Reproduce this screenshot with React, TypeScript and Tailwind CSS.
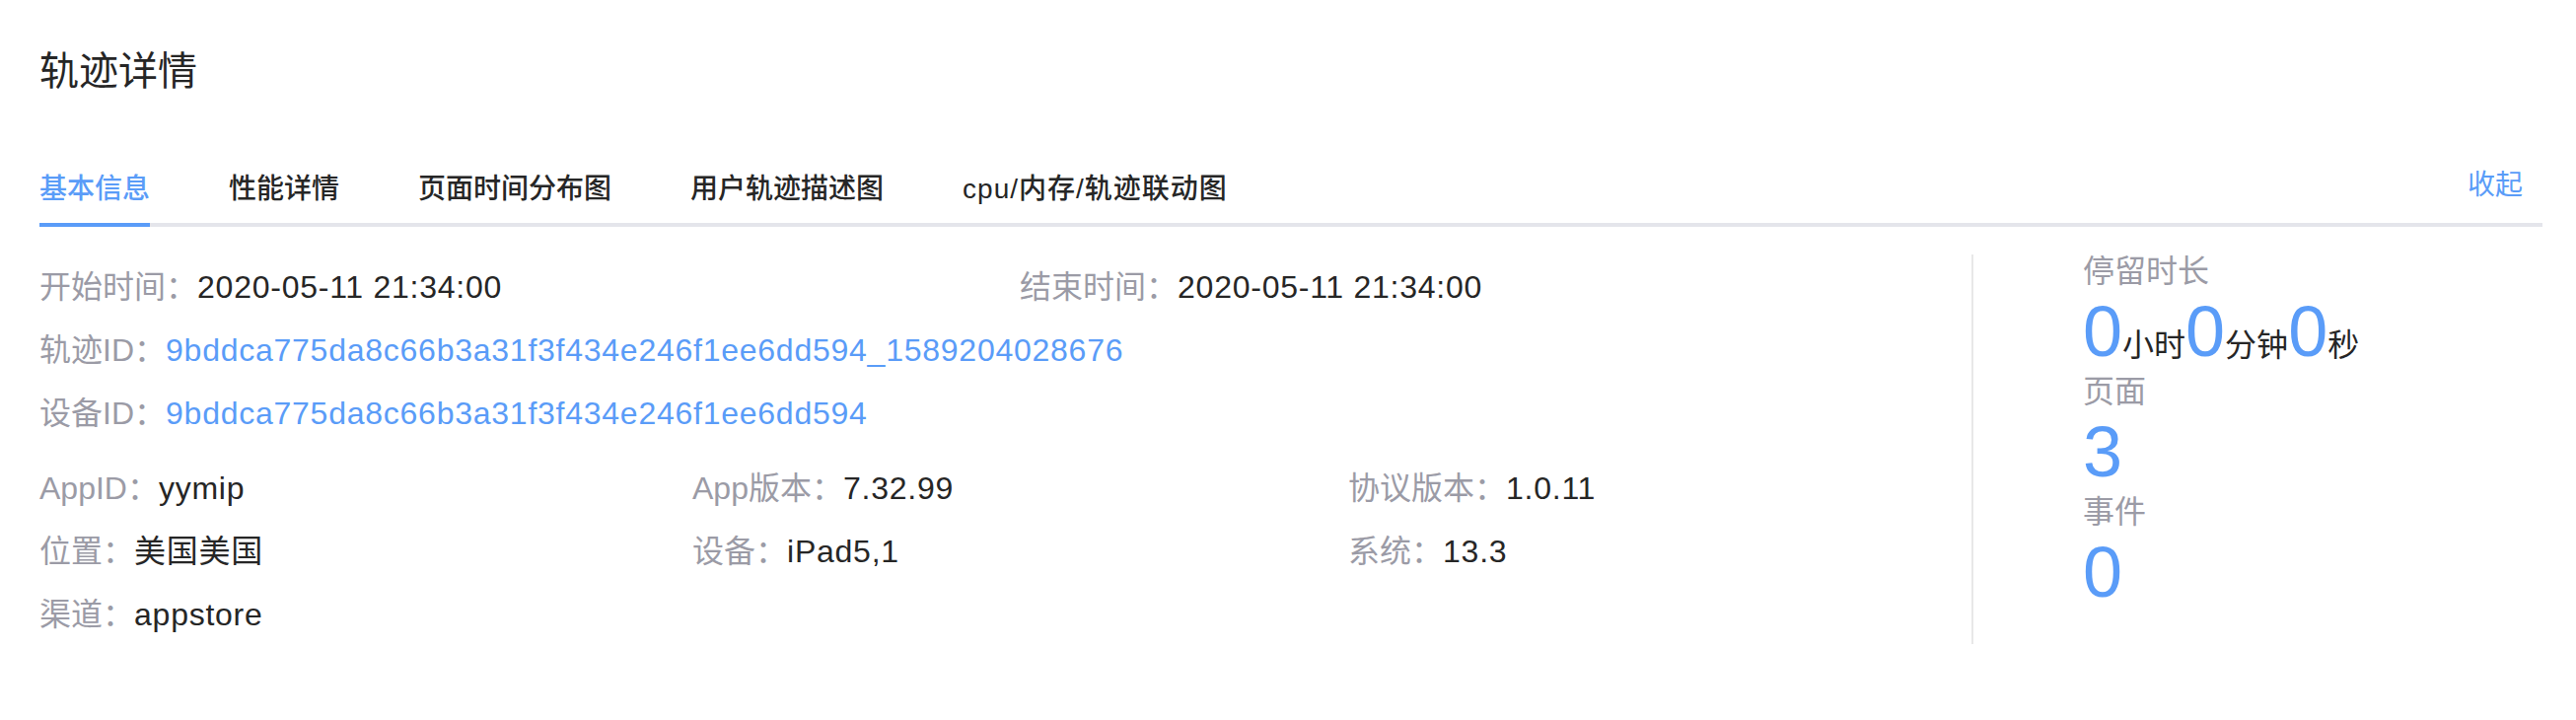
import React from "react";

const tabs = ["基本信息", "性能详情", "页面时间分布图", "用户轨迹描述图", "cpu/内存/轨迹联动图"];

function Field({ label, value, link = false }: { label: string; value: string; link?: boolean }) {
  return (
    <div className="h-[48px] leading-[48px] whitespace-nowrap">
      <span className="text-[#9b9ba6]">{label}：</span>
      <span className={"tracking-[0.75px] " + (link ? "text-[#5a9cf8]" : "text-[#262626]")}>{value}</span>
    </div>
  );
}

function Stat({ label, children }: { label: string; children: React.ReactNode }) {
  return (
    <div>
      <div className="h-[48px] leading-[48px] text-[#9b9ba6]">{label}</div>
      <div className="h-[74px] leading-[74px] whitespace-nowrap">{children}</div>
    </div>
  );
}

export default function App() {
  return (
    <div
      className="w-full h-[730px] bg-white text-[#262626]"
      style={{ fontFamily: '"Liberation Sans", "Noto Sans CJK SC", sans-serif' }}
    >
      {/* Title */}
      <div className="pl-[40px] pt-[44px] h-[100px] text-[40px] leading-[56px]">轨迹详情</div>

      {/* Tabs */}
      <div className="ml-[40px] mr-[34px] mt-[68px] flex items-end border-b-4 border-[#e4e5eb]">
        <div className="flex gap-[80px]">
          {tabs.map((t, i) => (
            <div
              key={t}
              className={
                "h-[58px] -mb-[4px] border-b-4 text-[28px] leading-[40px] font-medium " +
                (i === 0 ? "border-[#5a9cf8] text-[#5a9cf8]" : "border-transparent text-[#262626]") +
                (i === 4 ? " tracking-[1px]" : "")
              }
            >
              {t}
            </div>
          ))}
        </div>
        <div className="ml-auto mr-[20px] h-[58px] text-[28px] leading-[40px] text-[#5a9cf8]">收起</div>
      </div>

      {/* Body */}
      <div className="flex ml-[40px] mt-[21px] text-[32px]">
        <div className="w-[1959px] pt-[16px] pb-[6px]">
          <div className="grid grid-cols-[994px_1fr] gap-y-[16px]">
            <Field label="开始时间" value="2020-05-11 21:34:00" />
            <Field label="结束时间" value="2020-05-11 21:34:00" />
            <div className="col-span-2">
              <Field label="轨迹ID" value="9bddca775da8c66b3a31f3f434e246f1ee6dd594_1589204028676" link />
            </div>
            <div className="col-span-2">
              <Field label="设备ID" value="9bddca775da8c66b3a31f3f434e246f1ee6dd594" link />
            </div>
          </div>
          <div className="grid grid-cols-[662px_665px_1fr] gap-y-[16px] mt-[28px]">
            <Field label="AppID" value="yymip" />
            <Field label="App版本" value="7.32.99" />
            <Field label="协议版本" value="1.0.11" />
            <Field label="位置" value="美国美国" />
            <Field label="设备" value="iPad5,1" />
            <Field label="系统" value="13.3" />
            <Field label="渠道" value="appstore" />
          </div>
        </div>
        <div className="w-[2px] mt-[7px] bg-[#e8e8e8]" />
        <div className="pl-[111px]">
          <Stat label="停留时长">
            <span className="text-[72px] text-[#5a9cf8]">0</span>
            <span>小时</span>
            <span className="text-[72px] text-[#5a9cf8]">0</span>
            <span>分钟</span>
            <span className="text-[72px] text-[#5a9cf8]">0</span>
            <span>秒</span>
          </Stat>
          <Stat label="页面">
            <span className="text-[72px] text-[#5a9cf8]">3</span>
          </Stat>
          <Stat label="事件">
            <span className="text-[72px] text-[#5a9cf8]">0</span>
          </Stat>
        </div>
      </div>
    </div>
  );
}
